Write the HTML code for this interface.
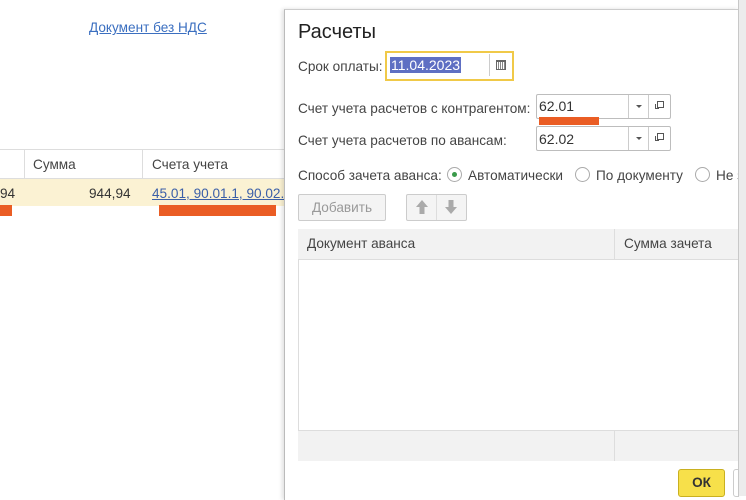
<!DOCTYPE html><html><head><meta charset="utf-8"><style>
body{margin:0;width:746px;height:496px;overflow:hidden;background:#fff;font-family:"Liberation Sans",Arial,sans-serif;font-size:13.6px;color:#444;position:relative}
.a{position:absolute;white-space:nowrap}
.f{position:absolute;border:1px solid #bdbdbd;border-radius:2px;background:#fff;height:23px}
</style></head><body>
<div class="a" style="left:89px;top:20px;color:#3b6fc0;text-decoration:underline">Документ без НДС</div>
<div class="a" style="left:0;top:149px;width:290px;height:1px;background:#ddd"></div>
<div class="a" style="left:0;top:150px;width:290px;height:28px;border-bottom:1px solid #ddd"></div>
<div class="a" style="left:24px;top:150px;width:1px;height:28px;background:#ddd"></div>
<div class="a" style="left:142px;top:150px;width:1px;height:28px;background:#ddd"></div>
<div class="a" style="left:33px;top:157px">Сумма</div>
<div class="a" style="left:152px;top:157px">Счета учета</div>
<div class="a" style="left:0;top:179px;width:290px;height:27px;background:#fbf2d3"></div>
<div class="a" style="left:0;top:186px;color:#333">94</div>
<div class="a" style="left:89px;top:186px;color:#333">944,94</div>
<div class="a" style="left:152px;top:186px;color:#3b5fa8;text-decoration:underline">45.01, 90.01.1, 90.02.</div>
<div class="a" style="left:0;top:205px;width:12px;height:11px;background:#ea5d24"></div>
<div class="a" style="left:159px;top:205px;width:117px;height:11px;background:#ea5d24"></div>

<div class="a" style="left:284px;top:9px;width:454px;height:490px;background:#fff;border-left:1px solid #bbb;border-top:1px solid #ccc;box-shadow:-2px 0 4px rgba(0,0,0,.12);overflow:hidden">
 <div class="a" style="left:13px;top:11px;font-size:20px;color:#222">Расчеты</div>
 <div class="a" style="left:13px;top:49px">Срок оплаты:</div>
 <div class="a" style="left:100px;top:41px;width:125px;height:26px;border:2px solid #f0c948;background:#fff"></div>
 <div class="a" style="left:105px;top:47px;background:#5e6fc3;color:#fff;padding:0 1px;font-size:14px">11.04.2023</div>
 <div class="a" style="left:204px;top:44px;width:1px;height:22px;background:#ccc"></div>
 <div class="a" style="left:211px;top:50px;width:8px;height:7px;border:1px solid #666;border-top-width:2px;background:repeating-linear-gradient(90deg,#fff 0 1px,#888 1px 2px)"></div>
 <div class="a" style="left:13px;top:91px">Счет учета расчетов с контрагентом:</div>
 <div class="f" style="left:251px;top:84px;width:133px"></div>
 <div class="a" style="left:343px;top:85px;width:1px;height:23px;background:#ccc"></div>
 <div class="a" style="left:363px;top:85px;width:1px;height:23px;background:#ccc"></div>
 <div class="a" style="left:254px;top:88px;color:#333;font-size:14px">62.01</div>
 <div class="a" style="left:254px;top:107px;width:60px;height:8px;background:#ea5d24"></div>
 <div class="a" style="left:351px;top:95px;border:3px solid transparent;border-top:3px solid #555"></div>
 <div class="a" style="left:372px;top:91px;width:5px;height:5px;border:1px solid #555"></div>
 <div class="a" style="left:370px;top:94px;width:3px;height:4px;border-left:1px solid #555;border-bottom:1px solid #555"></div>
 <div class="a" style="left:13px;top:123px">Счет учета расчетов по авансам:</div>
 <div class="f" style="left:251px;top:116px;width:133px"></div>
 <div class="a" style="left:343px;top:117px;width:1px;height:23px;background:#ccc"></div>
 <div class="a" style="left:363px;top:117px;width:1px;height:23px;background:#ccc"></div>
 <div class="a" style="left:254px;top:121px;color:#333;font-size:14px">62.02</div>
 <div class="a" style="left:351px;top:127px;border:3px solid transparent;border-top:3px solid #555"></div>
 <div class="a" style="left:372px;top:123px;width:5px;height:5px;border:1px solid #555"></div>
 <div class="a" style="left:370px;top:126px;width:3px;height:4px;border-left:1px solid #555;border-bottom:1px solid #555"></div>
 <div class="a" style="left:13px;top:158px">Способ зачета аванса:</div>
 <div class="a" style="left:162px;top:157px;width:13px;height:13px;border:1px solid #aaa;border-radius:50%"></div>
 <div class="a" style="left:167px;top:162px;width:5px;height:5px;background:#3a9a4a;border-radius:50%"></div>
 <div class="a" style="left:183px;top:158px">Автоматически</div>
 <div class="a" style="left:290px;top:157px;width:13px;height:13px;border:1px solid #aaa;border-radius:50%"></div>
 <div class="a" style="left:311px;top:158px">По документу</div>
 <div class="a" style="left:410px;top:157px;width:13px;height:13px;border:1px solid #aaa;border-radius:50%"></div>
 <div class="a" style="left:431px;top:158px">Не з</div>
 <div class="a" style="left:13px;top:184px;width:86px;height:25px;border:1px solid #ccc;border-radius:2px;background:#f4f4f4;color:#999;text-align:center;line-height:25px">Добавить</div>
 <div class="a" style="left:121px;top:184px;width:59px;height:25px;border:1px solid #ccc;border-radius:2px;background:#f4f4f4"></div>
 <div class="a" style="left:151px;top:185px;width:1px;height:25px;background:#ddd"></div>
 <svg class="a" style="left:130px;top:189px" width="14" height="16"><path d="M7 1 L13 8 H9.5 V15 H4.5 V8 H1 Z" fill="#aaa"/></svg>
 <svg class="a" style="left:159px;top:189px" width="14" height="16"><path d="M7 15 L13 8 H9.5 V1 H4.5 V8 H1 Z" fill="#aaa"/></svg>
 <div class="a" style="left:13px;top:219px;width:450px;height:232px;border-left:1px solid #ddd"></div>
 <div class="a" style="left:13px;top:219px;width:450px;height:30px;background:#f2f2f2;border-bottom:1px solid #ddd"></div>
 <div class="a" style="left:329px;top:219px;width:1px;height:30px;background:#ddd"></div>
 <div class="a" style="left:22px;top:226px">Документ аванса</div>
 <div class="a" style="left:339px;top:226px">Сумма зачета</div>
 <div class="a" style="left:13px;top:420px;width:450px;height:30px;background:#f2f2f2;border-top:1px solid #ddd"></div>
 <div class="a" style="left:329px;top:421px;width:1px;height:30px;background:#ddd"></div>
 <div class="a" style="left:393px;top:459px;width:45px;height:26px;border:1px solid #c9b020;border-radius:3px;background:#f7e04a;color:#333;font-weight:bold;text-align:center;line-height:26px">ОК</div>
 <div class="a" style="left:448px;top:459px;width:20px;height:26px;border:1px solid #ccc;border-radius:3px"></div>
</div>
<div class="a" style="left:738px;top:0;width:8px;height:496px;background:#ececec;border-left:1px solid #c8c8c8"></div>
</body></html>
